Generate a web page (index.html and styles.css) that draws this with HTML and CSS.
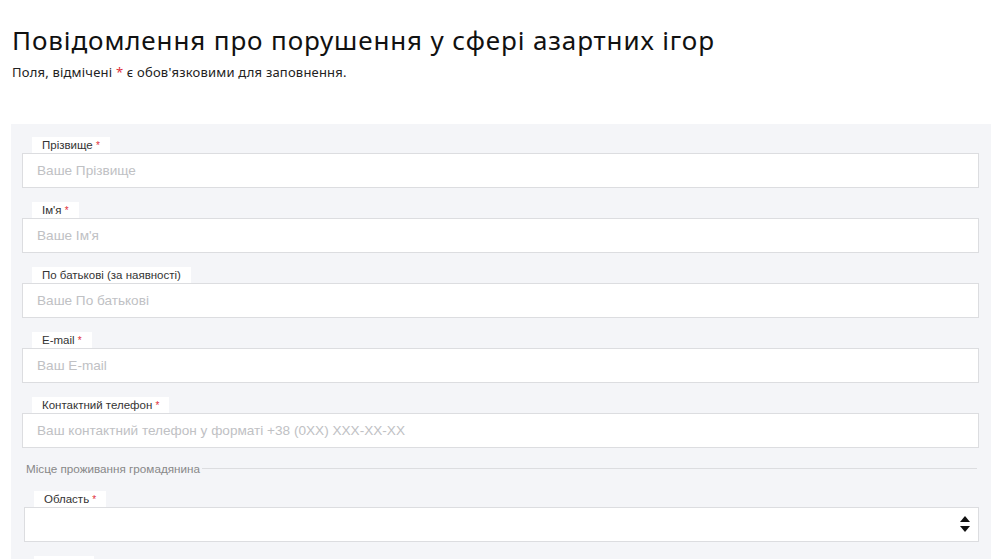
FILE: index.html
```html
<html>
	<head>
		<meta charset="utf-8">
		<link rel="stylesheet" href="styles.css">
	</head>
<body>
<div class="page">
	<h1 class="title">Повідомлення про порушення у сфері азартних ігор</h1>
	<p class="note">Поля, відмічені <span class="req">*</span> є обов'язковими для заповнення.</p>

	<div class="panel">
		<div class="field">
			<label class="tab">Прізвище <span class="req">*</span></label>
			<input class="inp" type="text" placeholder="Ваше Прізвище">
		</div>
		<div class="field">
			<label class="tab">Ім'я <span class="req">*</span></label>
			<input class="inp" type="text" placeholder="Ваше Ім'я">
		</div>
		<div class="field">
			<label class="tab">По батькові (за наявності)</label>
			<input class="inp" type="text" placeholder="Ваше По батькові">
		</div>
		<div class="field">
			<label class="tab">E-mail <span class="req">*</span></label>
			<input class="inp" type="text" placeholder="Ваш E-mail">
		</div>
		<div class="field">
			<label class="tab">Контактний телефон <span class="req">*</span></label>
			<input class="inp" type="text" placeholder="Ваш контактний телефон у форматі +38 (0XX) XXX-XX-XX">
		</div>

		<div class="section">
			<span>Місце проживання громадянина</span>
			<div class="rule"></div>
		</div>

		<div class="field sub">
			<label class="tab">Область <span class="req">*</span></label>
			<div class="sel">
				<select class="inp"><option></option></select>
				<svg class="arrows" width="12" height="22" viewBox="0 0 12 22">
					<path d="M6 3 L11 9 L1 9 Z" fill="#111"/>
					<path d="M1 13 L11 13 L6 19 Z" fill="#111"/>
				</svg>
			</div>
		</div>
		<div class="field sub">
			<label class="tab">Район <span class="req">*</span></label>
			<div class="sel">
				<select class="inp"><option></option></select>
			</div>
		</div>
	</div>
</div>
</body>
</html>
```

FILE: styles.css
```css
body {
	margin: 0;
	padding: 0;
	background: #fff;
	overflow: hidden;
}

.page {
	padding: 25px 9px 0 11px;
}

.title {
	margin: 0 0 0 1px;
	font-family: "Noto Sans", sans-serif;
	font-weight: 400;
	font-size: 26px;
	line-height: 30px;
	letter-spacing: 0.88px;
	color: #111;
}

.note {
	margin: 9px 0 0 1px;
	font-family: "Noto Sans", sans-serif;
	font-size: 13px;
	line-height: 16px;
	letter-spacing: 0.2px;
	color: #222;
}

.req {
	color: #e0303a;
}

.panel {
	margin-top: 44px;
	background: #f4f5f8;
	padding: 13px 12px 20px 11px;
}

.field {
	display: flex;
	flex-direction: column;
	align-items: flex-start;
	margin-bottom: 14px;
}

.tab {
	margin-left: 10px;
	background: #fff;
	padding: 0 10px;
	height: 16px;
	line-height: 17px;
	font-family: "Liberation Sans", Arial, sans-serif;
	font-size: 11.5px;
	color: #333;
}

.tab .req {
	font-size: 10px;
}

.inp {
	box-sizing: border-box;
	width: 100%;
	height: 35px;
	border: 1px solid #dcdde0;
	background: #fff;
	padding: 0 14px;
	font-family: "Liberation Sans", Arial, sans-serif;
	font-size: 13.6px;
	color: #333;
	outline: none;
	margin: 0;
}

.inp::placeholder {
	color: #c0c1c4;
}

.section {
	display: flex;
	align-items: center;
	margin: 5px 2px 16px 4px;
	font-family: "Liberation Sans", Arial, sans-serif;
	font-size: 11.7px;
	color: #888;
}

.rule {
	flex: 1;
	height: 1px;
	background: #dcdde0;
	margin-left: 2px;
}

.sub {
	padding-left: 2px;
}

.sel {
	position: relative;
	width: 100%;
}

.sel select {
	appearance: none;
	-webkit-appearance: none;
	border-radius: 0;
	display: block;
}

.arrows {
	position: absolute;
	right: 8px;
	top: 6px;
}
```
